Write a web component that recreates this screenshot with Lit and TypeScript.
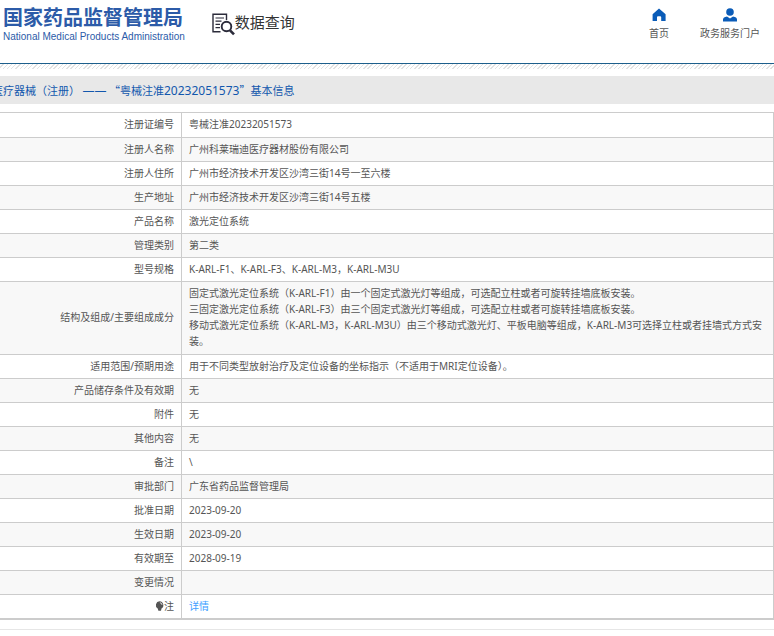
import { LitElement, html, css, svg, nothing } from "lit";
import { customElement } from "lit/decorators.js";

interface Row {
  label: string;
  lines: string[];
  link?: boolean;
  note?: boolean;
}

const ROWS: Row[] = [
  { label: "注册证编号", lines: ["粤械注准20232051573"] },
  { label: "注册人名称", lines: ["广州科莱瑞迪医疗器材股份有限公司"] },
  { label: "注册人住所", lines: ["广州市经济技术开发区沙湾三街14号一至六楼"] },
  { label: "生产地址", lines: ["广州市经济技术开发区沙湾三街14号五楼"] },
  { label: "产品名称", lines: ["激光定位系统"] },
  { label: "管理类别", lines: ["第二类"] },
  { label: "型号规格", lines: ["K-ARL-F1、K-ARL-F3、K-ARL-M3，K-ARL-M3U"] },
  {
    label: "结构及组成/主要组成成分",
    lines: [
      "固定式激光定位系统（K-ARL-F1）由一个固定式激光灯等组成，可选配立柱或者可旋转挂墙底板安装。",
      "三固定激光定位系统（K-ARL-F3）由三个固定式激光灯等组成，可选配立柱或者可旋转挂墙底板安装。",
      "移动式激光定位系统（K-ARL-M3，K-ARL-M3U）由三个移动式激光灯、平板电脑等组成，K-ARL-M3可选择立柱或者挂墙式方式安装。",
    ],
  },
  { label: "适用范围/预期用途", lines: ["用于不同类型放射治疗及定位设备的坐标指示（不适用于MRI定位设备）。"] },
  { label: "产品储存条件及有效期", lines: ["无"] },
  { label: "附件", lines: ["无"] },
  { label: "其他内容", lines: ["无"] },
  { label: "备注", lines: ["\\"] },
  { label: "审批部门", lines: ["广东省药品监督管理局"] },
  { label: "批准日期", lines: ["2023-09-20"] },
  { label: "生效日期", lines: ["2023-09-20"] },
  { label: "有效期至", lines: ["2028-09-19"] },
  { label: "变更情况", lines: [""] },
  { label: "注", lines: ["详情"], link: true, note: true },
];

const homeIcon = svg`<path fill="#0b5cb8" d="M7 0.5 L13.6 6.2 V13 H9.2 V9.2 Q9.2 8.2 8.2 8.2 H6 Q5 8.2 5 9.2 V13 H0.6 V6.2 Z"/>`;
const userIcon = svg`<circle cx="7" cy="4" r="3.8" fill="#0b5cb8"/>
  <path fill="#0b5cb8" d="M0 13.4 V11.6 Q0 9 4 8.4 L7 10.6 L10 8.4 Q14 9 14 11.6 V13.4 Z"/>`;

@customElement("app-root")
export class AppRoot extends LitElement {
  static styles = css`
    :host {
      display: block;
      overflow: hidden;
      background: #fff;
      color: #555;
      font: 10px/16px "Noto Sans", "Noto Sans CJK SC", sans-serif;
    }
    a {
      text-decoration: none;
      color: inherit;
    }
    .header {
      display: flex;
      align-items: flex-start;
      height: 63px;
      border-bottom: 1px solid #1d5f8c;
    }
    .brand {
      display: block;
      margin: 5px 0 0 3px;
      color: #2c5ba8;
      white-space: nowrap;
    }
    .brand-cn {
      display: block;
      font: bold 20px/24px "Noto Sans CJK SC", sans-serif;
    }
    .brand-en {
      display: block;
      font: 400 10px/16px "Liberation Sans", sans-serif;
    }
    .query {
      display: flex;
      margin: 10px 0 0 27px;
      font: 15px/24px "Noto Sans CJK SC", sans-serif;
      color: #333;
    }
    .query svg {
      margin-top: 3px;
    }
    .nav {
      display: flex;
      gap: 31px;
      margin: 8px 14px 0 auto;
    }
    .nav a {
      display: flex;
      flex-direction: column;
      align-items: center;
      gap: 3px;
      white-space: nowrap;
    }
    .hatch {
      height: 5px;
      background: repeating-linear-gradient(135deg, #fff 0 2px, #e2e2e2 2px 3px);
    }
    .title {
      margin: 7px 0 8px;
      background: #e8e8e8;
      color: #1257ad;
      font: 400 11px/28px "Noto Sans CJK SC", sans-serif;
      white-space: nowrap;
    }
    .title-text {
      margin-left: -8px;
    }
    .code {
      font: 12px/16px "Noto Sans", sans-serif;
    }
    .detail {
      width: 100%;
      border-collapse: collapse;
      border-bottom: 2px solid #ccc;
    }
    th,
    td {
      border: 1px solid #ccc;
      padding: 3px 7px 4px;
      font-weight: 400;
      vertical-align: middle;
      height: 16px;
    }
    th {
      width: 167px;
      border-left: 0;
      text-align: right;
    }
    td {
      text-align: left;
    }
    tr:nth-child(even) {
      background: #f8f8f8;
    }
    .tall > *,
    tr:first-child > * {
      padding-bottom: 5px;
    }
    .link {
      color: #409eff;
    }
    .bulb {
      vertical-align: -1px;
    }
    .footer {
      margin-top: 9px;
      border-top: 1px solid #e6e6e6;
      height: 6px;
    }
  `;

  render() {
    return html`
      <header class="header">
        <a class="brand" href="#">
          <span class="brand-cn">国家药品监督管理局</span>
          <span class="brand-en">National Medical Products Administration</span>
        </a>
        <a class="query" href="#">
          <svg width="23" height="23" viewBox="0 0 23 23" fill="none" stroke="#2b2b3a" aria-hidden="true">
            <path stroke-width="1.4" d="M8.5 18.8 H1 V1.2 H14.5 V7" />
            <path stroke-width="1.2" d="M3.5 5 H12 M3.5 8.2 H9.5 M3.5 11.4 H8 M3.5 14.6 H8" />
            <circle cx="14.5" cy="13.5" r="4.8" stroke-width="1.9" />
            <path stroke-width="2.6" d="M18 17.4 L22 21.4" />
          </svg>
          <span>数据查询</span>
        </a>
        <nav class="nav">
          <a href="#"><svg width="14" height="14" viewBox="0 0 14 14" aria-hidden="true">${homeIcon}</svg>首页</a>
          <a href="#"><svg width="14" height="14" viewBox="0 0 14 14" aria-hidden="true">${userIcon}</svg>政务服务门户</a>
        </nav>
      </header>
      <div class="hatch"></div>
      <main>
        <h1 class="title">
          <span class="title-text">医疗器械（注册） <span class="code">——</span> “粤械注准<span class="code">20232051573</span>”基本信息</span>
        </h1>
        <table class="detail">
          <tbody>
            ${ROWS.map(
              (row) => html`<tr class=${row.lines.length > 1 ? "tall" : nothing}>
                <th scope="row">${row.note ? this.bulb() : nothing}${row.label}</th>
                <td>
                  ${row.link
                    ? html`<a class="link" href="#">${row.lines[0]}</a>`
                    : row.lines.map((line) => html`<div>${line}</div>`)}
                </td>
              </tr>`,
            )}
          </tbody>
        </table>
      </main>
      <footer class="footer"></footer>
    `;
  }

  private bulb() {
    return html`<svg class="bulb" width="9" height="10" viewBox="0 0 9 10" aria-hidden="true">
      <path fill="#555" d="M4.5 0.3 A3.9 3.9 0 0 1 6.5 7.5 L6 9.7 H3.4 L2.7 7.5 A3.9 3.9 0 0 1 4.5 0.3 Z" />
      <path fill="none" stroke="#fff" stroke-width="0.8" d="M4.9 1.7 Q6.9 1.9 7 3.9" />
    </svg>`;
  }
}
